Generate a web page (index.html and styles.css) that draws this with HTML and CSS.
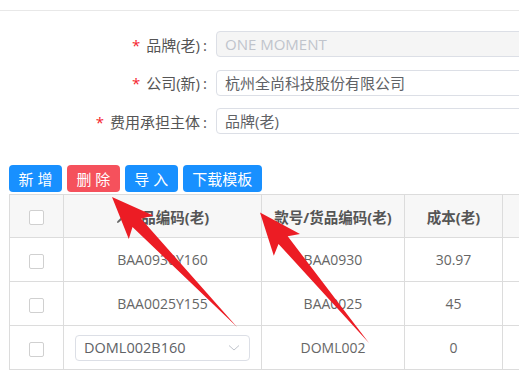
FILE: index.html
```html
<!DOCTYPE html>
<html lang="zh">
<head>
    <meta charset="UTF-8">
    <meta name="viewport" content="width=device-width, initial-scale=1.0">
    <title>费用承担</title>
    <link rel="stylesheet" href="styles.css">
</head>
<body>
    <div class="topbar"></div>

    <div class="form">
        <div class="form-row">
            <label class="form-label"><span class="req">*</span>品牌(老)<span class="colon">:</span></label>
            <div class="form-input disabled">ONE MOMENT</div>
        </div>
        <div class="form-row">
            <label class="form-label"><span class="req">*</span>公司(新)<span class="colon">:</span></label>
            <div class="form-input">杭州全尚科技股份有限公司</div>
        </div>
        <div class="form-row">
            <label class="form-label"><span class="req">*</span>费用承担主体<span class="colon">:</span></label>
            <div class="form-input">品牌(老)</div>
        </div>
    </div>

    <div class="toolbar">
        <button class="btn btn-blue">新 增</button>
        <button class="btn btn-red">删 除</button>
        <button class="btn btn-blue">导 入</button>
        <button class="btn btn-blue">下载模板</button>
    </div>

    <table class="grid">
        <colgroup>
            <col style="width:54px">
            <col style="width:198px">
            <col style="width:143px">
            <col style="width:98px">
            <col style="width:120px">
        </colgroup>
        <thead>
            <tr>
                <th><span class="check"></span></th>
                <th>
                    <svg class="edit-icon" width="8" height="8" viewBox="0 0 8 8">
                        <path d="M1 7 L1.4 5.2 L5.6 1 L7 2.4 L2.8 6.6 Z" fill="#666"/>
                    </svg>商品编码(老)
                </th>
                <th>款号/货品编码(老)</th>
                <th>成本(老)</th>
                <th></th>
            </tr>
        </thead>
        <tbody>
            <tr>
                <td><span class="check"></span></td>
                <td>BAA0930Y160</td>
                <td>BAA0930</td>
                <td>30.97</td>
                <td></td>
            </tr>
            <tr>
                <td><span class="check"></span></td>
                <td>BAA0025Y155</td>
                <td>BAA0025</td>
                <td>45</td>
                <td></td>
            </tr>
            <tr>
                <td><span class="check"></span></td>
                <td>
                    <div class="select">
                        <span>DOML002B160</span>
                        <svg width="12" height="8" viewBox="0 0 12 8">
                            <path d="M1 1.5 L6 6 L11 1.5" fill="none" stroke="#c0c4cc" stroke-width="1"/>
                        </svg>
                    </div>
                </td>
                <td>DOML002</td>
                <td>0</td>
                <td></td>
            </tr>
        </tbody>
    </table>

    <!-- annotation arrows drawn over the screenshot -->
    <svg class="arrows" width="519" height="382" viewBox="0 0 519 382">
        <polygon points="112,197 153.2,215.5 141.1,218.8 237,327 132.5,227 128.8,238.9" fill="#ec1c24"/>
        <polygon points="260,212.5 300,233.9 287.7,236.3 369,343 278.5,243.9 273.8,255.7" fill="#ec1c24"/>
    </svg>
</body>
</html>
```

FILE: styles.css
```css
body {
    margin: 0;
    width: 519px;
    height: 382px;
    overflow: hidden;
    position: relative;
    background-color: #ffffff;
    font-family: "Open Sans", "Noto Sans CJK SC", sans-serif;
    font-size: 14px;
    color: #606266;
}

.topbar {
    height: 10px;
    border-bottom: 1px solid #e8e8e8;
}

.form {
    display: flex;
    flex-direction: column;
    gap: 12.5px;
    padding-top: 20px;
}

.form-row {
    display: flex;
    align-items: center;
    gap: 9px;
}

.form-label {
    width: 207px;
    flex-shrink: 0;
    text-align: right;
    font-size: 15px;
    color: #555555;
    white-space: nowrap;
}

.req {
    color: #f5222d;
    margin-right: 6px;
}

.colon {
    margin-left: 3px;
}

.form-input {
    flex-shrink: 0;
    width: 400px;
    height: 26px;
    line-height: 25px;
    box-sizing: border-box;
    padding-left: 8px;
    border: 1px solid #dcdfe6;
    border-radius: 4px;
    font-size: 15px;
    color: #606266;
}

.form-input.disabled {
    background-color: #f5f5f5;
    color: #c0c4cc;
}

.toolbar {
    display: flex;
    gap: 5px;
    padding-left: 9px;
    margin-top: 31px;
}

.btn {
    height: 27px;
    padding: 0 9.5px;
    border: none;
    border-radius: 4px;
    font-family: inherit;
    font-size: 15px;
    color: #ffffff;
    cursor: pointer;
    width: auto;
}

.btn-blue {
    background-color: #1890ff;
}

.btn-red {
    background-color: #f5515c;
}

.grid {
    margin-left: 9px;
    margin-top: 2px;
    border-collapse: collapse;
    table-layout: fixed;
    width: 613px;
}

.grid th,
.grid td {
    border: 1px solid #dcdcdc;
    text-align: center;
    padding: 0;
}

.grid th {
    height: 42px;
    background-color: #f7f7f7;
    color: #555555;
    font-weight: bold;
    font-size: 14.5px;
}

.grid td {
    height: 43px;
    color: #666666;
}

.edit-icon {
    margin-right: 3px;
    vertical-align: -1px;
}

.check {
    display: inline-block;
    width: 13px;
    height: 13px;
    border: 1px solid #d0d0d0;
    border-radius: 2px;
    background-color: #ffffff;
    vertical-align: middle;
}

.select {
    display: flex;
    align-items: center;
    justify-content: space-between;
    width: 175px;
    height: 26px;
    box-sizing: border-box;
    margin-left: 11px;
    padding: 0 9px 0 8px;
    border: 1px solid #dcdfe6;
    border-radius: 4px;
    color: #606266;
    font-size: 14.5px;
}

.arrows {
    position: absolute;
    left: 0;
    top: 0;
    pointer-events: none;
}
```
